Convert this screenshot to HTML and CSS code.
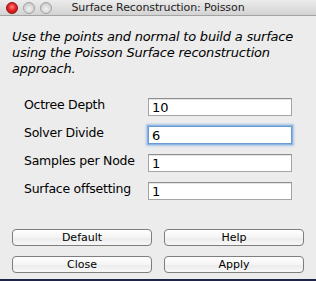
FILE: index.html
```html
<!DOCTYPE html>
<html>
<head>
<meta charset="utf-8">
<link rel="stylesheet" href="styles.css">
</head>
<body>
<div class="window">
  <div class="titlebar">
    <div class="lights">
      <span class="light red"></span>
      <span class="light gray"></span>
      <span class="light gray"></span>
    </div>
    <div class="title">Surface Reconstruction: Poisson</div>
  </div>
  <p class="desc">Use the points and normal to build a surface using the Poisson Surface reconstruction approach.</p>
  <div class="form">
    <label class="lbl">Octree Depth</label>
    <input class="field" type="text" value="10" readonly>
    <label class="lbl">Solver Divide</label>
    <input class="field focus" type="text" value="6" readonly>
    <label class="lbl">Samples per Node</label>
    <input class="field" type="text" value="1" readonly>
    <label class="lbl">Surface offsetting</label>
    <input class="field" type="text" value="1" readonly>
  </div>
  <div class="buttons">
    <button class="btn">Default</button>
    <button class="btn">Help</button>
    <button class="btn">Close</button>
    <button class="btn">Apply</button>
  </div>
  <div class="strip"></div>
</div>
</body>
</html>
```
FILE: styles.css
```css
html, body {
  margin: 0;
  padding: 0;
  background: #ececec;
}
.window {
  width: 316px;
  height: 281px;
  display: flex;
  flex-direction: column;
  background: #ececec;
  font-family: "DejaVu Sans", sans-serif;
  color: #000;
  overflow: hidden;
}
.titlebar {
  height: 15px;
  border-bottom: 1px solid #a3a3a3;
  background: linear-gradient(#ececec, #d3d3d3);
  position: relative;
  display: flex;
  align-items: center;
  justify-content: center;
  flex-shrink: 0;
}
.lights {
  position: absolute;
  left: 6px;
  top: 2px;
  display: flex;
  gap: 5px;
}
.light {
  width: 10px;
  height: 10px;
  border-radius: 50%;
  display: block;
}
.red {
  background: radial-gradient(circle at 50% 40%, #ff8a8a 0%, #e82424 45%, #a80c0c 100%);
  border: 1px solid #8e1414;
}
.gray {
  background: radial-gradient(circle at 50% 60%, #f2f2f2 0%, #d4d4d4 60%, #b4b4b4 100%);
  border: 1px solid #a2a2a2;
}
.title {
  font-size: 11px;
  color: #222;
  line-height: 15px;
  letter-spacing: -0.1px;
}
.desc {
  margin: 13px 0 0 12px;
  width: 300px;
  font-size: 13px;
  line-height: 16px;
  font-style: italic;
  letter-spacing: -0.2px;
}
.form {
  margin-top: 21px;
  padding-left: 24px;
  display: grid;
  grid-template-columns: 124px 144px;
  row-gap: 10px;
  align-items: center;
}
.lbl {
  font-size: 12.5px;
  letter-spacing: -0.25px;
  line-height: 18px;
  position: relative;
  top: -2px;
}
.field {
  box-sizing: border-box;
  width: 144px;
  height: 18px;
  margin: 0;
  padding: 1px 3px 0 3px;
  border: 1px solid #a5a5a5;
  border-top-color: #8e8e8e;
  background: #fff;
  font-family: "DejaVu Sans", sans-serif;
  font-size: 13px;
  color: #000;
  outline: none;
  box-shadow: inset 0 1px 0 #e4e4e4;
}
.field.focus {
  border-color: #6c9bd1;
  box-shadow: 0 0 0 1px #8db3e0, 0 0 2px 2px #a8c6ea;
}
.buttons {
  margin-top: 29px;
  padding: 0 12px;
  display: grid;
  grid-template-columns: 140px 140px;
  column-gap: 12px;
  row-gap: 10px;
}
.btn {
  box-sizing: border-box;
  height: 17px;
  margin: 0;
  padding: 0;
  border: 1px solid #7e7e7e;
  border-radius: 4px;
  background: linear-gradient(#ffffff, #f4f4f4 50%, #ebebeb 51%, #f7f7f7);
  font-family: "DejaVu Sans", sans-serif;
  font-size: 11px;
  line-height: 15px;
  color: #000;
  text-align: center;
}
.strip {
  margin-top: auto;
  height: 2px;
  background: #1f2347;
  flex-shrink: 0;
}
```
